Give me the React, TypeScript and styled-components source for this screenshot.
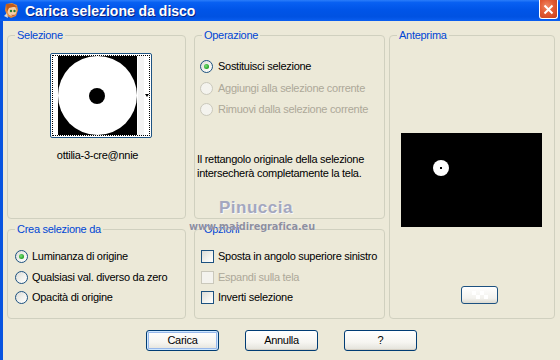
import React from 'react';
import styled, { createGlobalStyle } from 'styled-components';

const GlobalStyle = createGlobalStyle`
  html, body {
    margin: 0;
    padding: 0;
    width: 560px;
    height: 360px;
    overflow: hidden;
    background: #ece9d8;
  }
  * {
    box-sizing: border-box;
  }
`;

const font = `'Liberation Sans', Arial, sans-serif`;

const Window = styled.div`
  position: relative;
  width: 560px;
  height: 360px;
  display: flex;
  flex-direction: column;
  font-family: ${font};
  font-size: 11px;
  letter-spacing: -0.28px;
  color: #000;
`;

const TitleBar = styled.div`
  height: 21px;
  display: flex;
  align-items: center;
  padding-left: 3px;
  background: linear-gradient(
    to bottom,
    #2a7dfa 0%,
    #0860f2 12%,
    #0055e8 45%,
    #0052e2 80%,
    #0a5ef0 100%
  );
`;

const TitleText = styled.span`
  margin-left: 5px;
  font-family: ${font};
  font-weight: bold;
  font-size: 14px;
  letter-spacing: 0;
  color: #fff;
  text-shadow: 1px 1px 0 #0a1f80;
`;

const CloseButton = styled.div`
  margin-left: auto;
  margin-right: 2px;
  width: 19px;
  height: 19px;
  align-self: flex-start;
  border: 1px solid #fff;
  border-top: none;
  border-radius: 0 0 3px 3px;
  background: radial-gradient(circle at 40% 35%, #f08a66 0%, #e35a33 45%, #c7401c 100%);
  display: flex;
  align-items: center;
  justify-content: center;
`;

const Frame = styled.div`
  flex: 1;
  display: flex;
  flex-direction: column;
  border-left: 3px solid #0854e0;
  padding: 8px 0 0 4px;
`;

const Groups = styled.div`
  display: grid;
  grid-template-columns: 179px 8px 191px 4px 166px;
  grid-template-rows: 190px 96px;
  row-gap: 4px;
`;

const Group = styled.fieldset<{ $col: number; $row?: string }>`
  grid-column: ${(p) => p.$col};
  grid-row: ${(p) => p.$row || 'auto'};
  margin: 0;
  padding: 0;
  min-width: 0;
  border: 1px solid #d0d0bf;
  border-radius: 4px;
  display: flex;
  flex-direction: column;
`;

const Legend = styled.legend`
  margin-left: 7px;
  padding: 0 2px;
  line-height: 13px;
  color: #0046d5;
`;

const ThumbWrap = styled.div`
  display: flex;
  flex-direction: column;
  align-items: center;
  margin-top: 11px;
  margin-left: 8px;
`;

const ThumbButton = styled.div`
  width: 102px;
  height: 85px;
  border: 1px solid #1e5382;
  border-radius: 2px;
  background: #fff;
  padding: 1px;
`;

const ThumbFocus = styled.div`
  width: 100%;
  height: 100%;
  border: 1px dotted #000;
  display: flex;
  align-items: center;
  padding-left: 5px;
`;

const ThumbImage = styled.div`
  width: 80px;
  height: 79px;
  background: #000;
  display: flex;
  align-items: center;
  justify-content: center;
`;

const Disc = styled.div`
  width: 79px;
  height: 79px;
  border-radius: 50%;
  background: #fff;
  display: flex;
  align-items: center;
  justify-content: center;
`;

const Hole = styled.div`
  width: 16px;
  height: 16px;
  border-radius: 50%;
  background: #000;
`;

const ThumbSide = styled.div`
  width: 7px;
  height: 79px;
  background: #f4f4f4;
  margin-left: 1px;
`;

const DropArrow = styled.div`
  width: 0;
  height: 0;
  margin-left: 1px;
  border-left: 2.5px solid transparent;
  border-right: 2.5px solid transparent;
  border-top: 3px solid #000;
`;

const ThumbLabel = styled.div`
  margin-top: 10px;
  margin-left: -6px;
  line-height: 14px;
`;

const OptionList = styled.div<{ $top: number; $left: number; $gap: number }>`
  display: flex;
  flex-direction: column;
  gap: ${(p) => p.$gap}px;
  margin-top: ${(p) => p.$top}px;
  padding-left: ${(p) => p.$left}px;
`;

const Option = styled.div<{ $disabled?: boolean; $gap: number }>`
  display: flex;
  align-items: center;
  gap: ${(p) => p.$gap}px;
  height: 13px;
  line-height: 13px;
  white-space: nowrap;
  color: ${(p) => (p.$disabled ? '#aca899' : '#000')};
`;

const Radio = styled.span<{ $checked?: boolean; $disabled?: boolean }>`
  flex: none;
  width: 13px;
  height: 13px;
  border-radius: 50%;
  border: 1px solid ${(p) => (p.$disabled ? '#cac8bb' : '#1c5180')};
  background: ${(p) =>
    p.$disabled ? '#f4f3ee' : 'linear-gradient(135deg, #dcdcd7 0%, #f4f4f0 60%, #ffffff 100%)'};
  display: flex;
  align-items: center;
  justify-content: center;
  &::after {
    content: '';
    display: ${(p) => (p.$checked ? 'block' : 'none')};
    width: 5px;
    height: 5px;
    border-radius: 50%;
    background: radial-gradient(circle at 40% 40%, #7be07b 0%, #21a121 70%);
  }
`;

const Check = styled.span<{ $disabled?: boolean }>`
  flex: none;
  width: 13px;
  height: 13px;
  border: 1px solid ${(p) => (p.$disabled ? '#cac8bb' : '#1c5180')};
  background: ${(p) =>
    p.$disabled ? '#f4f3ee' : 'linear-gradient(135deg, #dcdcd7 0%, #f4f4f0 60%, #ffffff 100%)'};
`;

const Note = styled.div`
  margin-top: 36px;
  padding-left: 2px;
  line-height: 14px;
`;

const PreviewBody = styled.div`
  flex: 1;
  display: flex;
  flex-direction: column;
  align-items: flex-start;
  padding-left: 11px;
`;

const PreviewCanvas = styled.div`
  margin-top: 91px;
  width: 141px;
  height: 94px;
  background: #000;
  padding: 27px 0 0 32px;
`;

const PreviewDot = styled.div`
  width: 16px;
  height: 16px;
  border-radius: 50%;
  background: #fff;
  display: flex;
  align-items: center;
  justify-content: center;
  &::after {
    content: '';
    width: 2px;
    height: 2px;
    background: #000;
  }
`;

const SmallButton = styled.div`
  margin-top: 59px;
  margin-left: 60px;
  width: 37px;
  height: 18px;
  border: 1px solid #1c5180;
  border-radius: 3px;
  background: linear-gradient(to bottom, #ffffff 0%, #f3f2ee 70%, #dcdad0 100%);
  display: flex;
  align-items: center;
  justify-content: center;
`;

const ButtonRow = styled.div`
  display: flex;
  justify-content: center;
  gap: 26px;
  margin-top: 11px;
  padding-right: 4px;
`;

const PushButton = styled.div<{ $default?: boolean }>`
  width: 73px;
  height: 21px;
  border: 1px solid #003c74;
  border-radius: 3px;
  background: linear-gradient(to bottom, #ffffff 0%, #f6f5f1 60%, #e3e2da 100%);
  box-shadow: ${(p) =>
    p.$default
      ? 'inset 0 0 0 1px #cee7ff, inset 0 0 0 2px #98b8ea'
      : 'inset 0 -1px 0 #d6d0c5'};
  display: flex;
  align-items: center;
  justify-content: center;
  line-height: 13px;
`;

const Watermark = styled.div`
  position: absolute;
  left: 190px;
  top: 198px;
  width: 124px;
  display: flex;
  flex-direction: column;
  align-items: center;
  pointer-events: none;
`;

const MarkName = styled.div`
  font-family: ${font};
  font-weight: bold;
  font-size: 17px;
  letter-spacing: 0.5px;
  color: #a3a7bf;
  line-height: 20px;
  margin-left: 8px;
  text-shadow: 1px 1px 0 #f8f8f8;
`;

const MarkSite = styled.div`
  font-family: 'DejaVu Sans', sans-serif;
  font-weight: bold;
  font-size: 9.8px;
  letter-spacing: -0.1px;
  color: #8e8f9e;
  line-height: 12px;
  margin-top: 3px;
  text-shadow: 0 0 1px #ffffff;
`;

function AppIcon() {
  return (
    <svg width="17" height="17" viewBox="0 0 17 17">
      <path d="M3 2 L9 1 L14 3 L15 8 L13 14 L8 16 L4 14 L2 8 Z" fill="#e4893a" />
      <ellipse cx="9" cy="9" rx="4.5" ry="5" fill="#f6d0a8" />
      <path d="M3 2 L10 2 L14 5 L10 5 L6 6 L4 10 Z" fill="#c25a1c" />
      <circle cx="8" cy="9" r="1.2" fill="#2a7a30" />
      <circle cx="11.5" cy="9" r="1.2" fill="#2a7a30" />
      <path d="M8.5 13 Q10 14 11.5 13" stroke="#b03a2a" strokeWidth="0.8" fill="none" />
      <path d="M1 14 L4 11 L5 16 Z" fill="#d8d8d8" />
    </svg>
  );
}

export default function App() {
  return (
    <>
      <GlobalStyle />
      <Window>
        <TitleBar>
          <AppIcon />
          <TitleText>Carica selezione da disco</TitleText>
          <CloseButton>
            <svg width="11" height="11" viewBox="0 0 11 11">
              <path d="M1.5 1.5 L9.5 9.5 M9.5 1.5 L1.5 9.5" stroke="#fff" strokeWidth="2" />
            </svg>
          </CloseButton>
        </TitleBar>
        <Frame>
          <Groups>
            <Group $col={1} $row="1">
              <Legend>Selezione</Legend>
              <ThumbWrap>
                <ThumbButton>
                  <ThumbFocus>
                    <ThumbImage>
                      <Disc>
                        <Hole />
                      </Disc>
                    </ThumbImage>
                    <ThumbSide />
                    <DropArrow />
                  </ThumbFocus>
                </ThumbButton>
                <ThumbLabel>ottilia-3-cre@nnie</ThumbLabel>
              </ThumbWrap>
            </Group>

            <Group $col={3} $row="1">
              <Legend>Operazione</Legend>
              <OptionList $top={18} $left={5} $gap={8.5}>
                <Option $gap={5}>
                  <Radio $checked />
                  Sostituisci selezione
                </Option>
                <Option $gap={5} $disabled>
                  <Radio $disabled />
                  Aggiungi alla selezione corrente
                </Option>
                <Option $gap={5} $disabled>
                  <Radio $disabled />
                  Rimuovi dalla selezione corrente
                </Option>
              </OptionList>
              <Note>
                Il rettangolo originale della selezione
                <br />
                intersecherà completamente la tela.
              </Note>
            </Group>

            <Group $col={5} $row="1 / span 2">
              <Legend>Anteprima</Legend>
              <PreviewBody>
                <PreviewCanvas>
                  <PreviewDot />
                </PreviewCanvas>
                <SmallButton>
                  <svg width="16" height="8" viewBox="0 0 16 8">
                    <rect x="0" y="0" width="4" height="4" fill="#fff" />
                    <rect x="8" y="0" width="4" height="4" fill="#fff" />
                    <rect x="4" y="4" width="4" height="4" fill="#fff" />
                    <rect x="12" y="4" width="4" height="4" fill="#fff" />
                  </svg>
                </SmallButton>
              </PreviewBody>
            </Group>

            <Group $col={1} $row="2">
              <Legend>Crea selezione da</Legend>
              <OptionList $top={14} $left={7} $gap={7.5}>
                <Option $gap={4}>
                  <Radio $checked />
                  Luminanza di origine
                </Option>
                <Option $gap={4}>
                  <Radio />
                  Qualsiasi val. diverso da zero
                </Option>
                <Option $gap={4}>
                  <Radio />
                  Opacità di origine
                </Option>
              </OptionList>
            </Group>

            <Group $col={3} $row="2">
              <Legend>Opzioni</Legend>
              <OptionList $top={14} $left={6} $gap={7.5}>
                <Option $gap={4}>
                  <Check />
                  Sposta in angolo superiore sinistro
                </Option>
                <Option $gap={4} $disabled>
                  <Check $disabled />
                  Espandi sulla tela
                </Option>
                <Option $gap={4}>
                  <Check />
                  Inverti selezione
                </Option>
              </OptionList>
            </Group>
          </Groups>

          <ButtonRow>
            <PushButton $default>Carica</PushButton>
            <PushButton>Annulla</PushButton>
            <PushButton>?</PushButton>
          </ButtonRow>
        </Frame>

        <Watermark>
          <MarkName>Pinuccia</MarkName>
          <MarkSite>www.maidiregrafica.eu</MarkSite>
        </Watermark>
      </Window>
    </>
  );
}
